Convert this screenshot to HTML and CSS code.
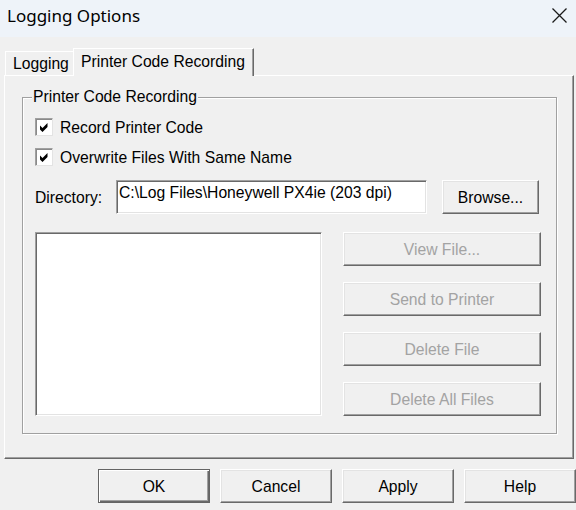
FILE: index.html
```html
<!DOCTYPE html>
<html lang="en">
<head>
<meta charset="utf-8">
<title>Logging Options</title>
<link rel="stylesheet" href="styles.css">
</head>
<body>
<div class="titlebar">
  <span class="title">Logging Options</span>
  <svg class="close" viewBox="0 0 15 15" aria-label="Close"><path d="M0.5 0.5 L14.5 14.5 M14.5 0.5 L0.5 14.5" stroke="#1a1a1a" stroke-width="1.3" fill="none"/></svg>
</div>
<div class="tabs">
  <div class="tab">Logging</div>
  <div class="tab active">Printer Code Recording</div>
</div>
<div class="panel">
  <div class="group">
    <div class="legend">Printer Code Recording</div>
    <label class="check"><span class="box"><svg class="mark" viewBox="0 0 16 16"><polygon points="4,6.5 6.5,9 11.5,4 11.5,8 6.5,13 4,10.5"/></svg></span><span class="check-text">Record Printer Code</span></label>
    <label class="check"><span class="box"><svg class="mark" viewBox="0 0 16 16"><polygon points="4,6.5 6.5,9 11.5,4 11.5,8 6.5,13 4,10.5"/></svg></span><span class="check-text">Overwrite Files With Same Name</span></label>
    <div class="dir-row">
      <span class="dir-label">Directory:</span>
      <div class="input sunken">C:\Log Files\Honeywell PX4ie (203 dpi)</div>
      <button class="btn browse">Browse...</button>
    </div>
    <div class="list-row">
      <div class="listbox sunken"></div>
      <div class="actions">
        <button class="btn" disabled>View File...</button>
        <button class="btn" disabled>Send to Printer</button>
        <button class="btn" disabled>Delete File</button>
        <button class="btn" disabled>Delete All Files</button>
      </div>
    </div>
  </div>
</div>
<div class="footer">
  <button class="btn default">OK</button>
  <button class="btn">Cancel</button>
  <button class="btn">Apply</button>
  <button class="btn">Help</button>
</div>
</body>
</html>
```
FILE: styles.css
```css
* { box-sizing: border-box; }
html, body { margin: 0; padding: 0; }
body {
  width: 576px;
  height: 510px;
  overflow: hidden;
  background: #f0f0f0;
  font-family: "Liberation Sans", Arial, sans-serif;
  font-size: 15.7px;
  line-height: 18px;
  color: #000;
}
.titlebar {
  height: 37px;
  background: #eef3f9;
  display: flex;
  align-items: center;
  justify-content: space-between;
  padding: 0 9px 6px 7px;
}
.title {
  font-family: "Noto Sans", sans-serif;
  font-size: 17px;
  color: #000;
}
.close { width: 15px; height: 15px; display: block; }

.tabs {
  display: flex;
  align-items: flex-end;
  padding-left: 5px;
  margin-top: 11px;
  height: 28px;
  margin-bottom: -1px;
  position: relative;
  z-index: 1;
}
.tab {
  width: 68px;
  height: 24px;
  margin-bottom: 1px;
  border-top: 1px solid #fff;
  border-left: 1px solid #fff;
  background: #f0f0f0;
  display: flex;
  align-items: center;
  padding-left: 7px;
  padding-top: 1px;
  white-space: nowrap;
}
.tab.active {
  width: 181px;
  height: 28px;
  margin-bottom: 0;
  padding-top: 0;
  padding-bottom: 2px;
  border-right: 1px solid #696969;
  box-shadow: inset -1px 0 0 #a0a0a0;
}

.panel {
  margin-left: 4px;
  width: 570px;
  height: 384px;
  border: 1px solid;
  border-color: #fff #696969 #696969 #fff;
  box-shadow: inset -1px -1px 0 #a0a0a0;
  padding: 21px 0 0 17px;
}
.group {
  width: 535px;
  height: 337px;
  border: 1px solid #a0a0a0;
  box-shadow: 1px 1px 0 #fff, inset 1px 1px 0 #fff;
  display: flex;
  flex-direction: column;
  align-items: flex-start;
  padding-left: 12px;
}
.legend {
  margin: -10px 0 0 -3px;
  padding: 0 1px;
  background: #f0f0f0;
}
.check {
  display: flex;
  align-items: center;
  gap: 7px;
  height: 18px;
  margin-top: 12px;
}
.check-text { padding-top: 1px; }
.box {
  width: 18px;
  height: 18px;
  background: #fff;
  border: 1px solid;
  border-color: #a0a0a0 #e3e3e3 #e3e3e3 #a0a0a0;
  box-shadow: inset 1px 1px 0 #8a8a8a;
  display: flex;
}
.mark { width: 16px; height: 16px; display: block; fill: #000; }

.sunken {
  background: #fff;
  border: 1px solid;
  border-color: #a0a0a0 #fff #fff #a0a0a0;
  box-shadow: inset 1px 1px 0 #696969, inset -1px -1px 0 #e3e3e3;
}
.dir-row {
  display: flex;
  align-items: center;
  margin-top: 14px;
  height: 34px;
}
.dir-label { width: 81px; padding-top: 1px; }
.input {
  width: 311px;
  height: 34px;
  padding: 3px 2px 0;
  white-space: nowrap;
  overflow: hidden;
}
.btn {
  font: inherit;
  line-height: 18px;
  color: #000;
  background: #f0f0f0;
  border: 1px solid;
  border-color: #fff #696969 #696969 #fff;
  box-shadow: inset -1px -1px 0 #a0a0a0, inset 1px 1px 0 #e3e3e3;
  padding: 1px 0 0;
  margin: 0;
  display: flex;
  align-items: center;
  justify-content: center;
  white-space: nowrap;
}
.btn:disabled { color: #a3a3a3; }
.btn.default {
  border-color: #646464;
  box-shadow: inset 1px 1px 0 #fff, inset -1px -1px 0 #696969, inset -2px -2px 0 #a0a0a0;
}
.browse { margin-left: 15px; width: 97px; height: 34px; }

.list-row {
  display: flex;
  margin-top: 18px;
}
.listbox { width: 287px; height: 184px; }
.actions {
  margin-left: 21px;
  display: flex;
  flex-direction: column;
  gap: 16px;
}
.actions .btn { width: 198px; height: 34px; }

.footer {
  display: flex;
  gap: 10px;
  margin-top: 10px;
  padding-left: 98px;
}
.footer .btn { width: 112px; height: 34px; }
```
